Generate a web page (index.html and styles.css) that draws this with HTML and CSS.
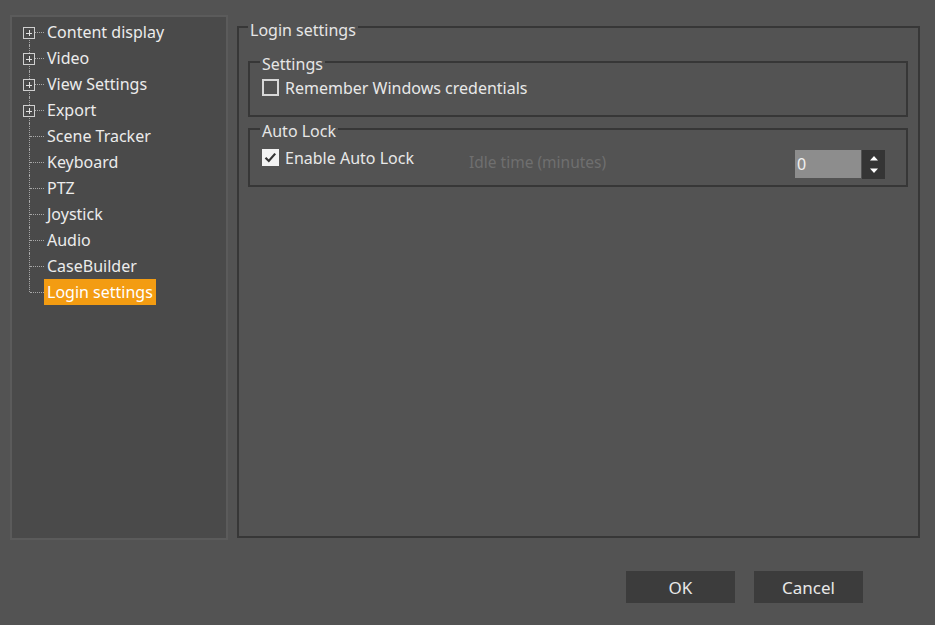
FILE: index.html
```html
<!DOCTYPE html>
<html lang="en">
<head>
<meta charset="utf-8">
<title>Options</title>
<link rel="stylesheet" href="styles.css">
</head>
<body>
<div class="dialog">
  <div class="dialog-body">
    <nav class="tree">
      <ul class="tree-list">
        <li class="tree-item first has-kids"><span class="expander"></span><span class="tree-label">Content display</span></li>
        <li class="tree-item has-kids"><span class="expander"></span><span class="tree-label">Video</span></li>
        <li class="tree-item has-kids"><span class="expander"></span><span class="tree-label">View Settings</span></li>
        <li class="tree-item has-kids"><span class="expander"></span><span class="tree-label">Export</span></li>
        <li class="tree-item"><span class="tree-label">Scene Tracker</span></li>
        <li class="tree-item"><span class="tree-label">Keyboard</span></li>
        <li class="tree-item"><span class="tree-label">PTZ</span></li>
        <li class="tree-item"><span class="tree-label">Joystick</span></li>
        <li class="tree-item"><span class="tree-label">Audio</span></li>
        <li class="tree-item"><span class="tree-label">CaseBuilder</span></li>
        <li class="tree-item last"><span class="tree-label selected">Login settings</span></li>
      </ul>
    </nav>

    <fieldset class="group page">
      <legend class="group-title">Login settings</legend>

      <fieldset class="group sub">
        <legend class="group-title">Settings</legend>
        <label class="check settings-check"><span class="check-box"></span>Remember Windows credentials</label>
      </fieldset>

      <fieldset class="group sub">
        <legend class="group-title">Auto Lock</legend>
        <div class="lock-row">
          <label class="check"><span class="check-box checked"><svg viewBox="0 0 17 17" width="17" height="17"><path d="M3.5 8.8 L6.8 12 L13.2 4.6" fill="none" stroke="#333" stroke-width="2.2"/></svg></span>Enable Auto Lock</label>
          <span class="idle-label">Idle time (minutes)</span>
          <div class="spin">
            <span class="spin-value">0</span>
            <div class="spin-buttons">
              <span class="spin-btn"><svg viewBox="0 0 10 6" width="10" height="6"><path d="M1 5.5 L5 1 L9 5.5 Z" fill="#fff"/></svg></span>
              <span class="spin-btn"><svg viewBox="0 0 10 6" width="10" height="6"><path d="M1 0.5 L5 5 L9 0.5 Z" fill="#fff"/></svg></span>
            </div>
          </div>
        </div>
      </fieldset>
    </fieldset>
  </div>

  <div class="dialog-footer">
    <button class="btn">OK</button>
    <button class="btn">Cancel</button>
  </div>
</div>
</body>
</html>
```

FILE: styles.css
```css
html, body {
  margin: 0;
  padding: 0;
}

body {
  background: #535353;
  color: #e8e8e8;
  font-family: "Noto Sans", "Open Sans", sans-serif;
  font-size: 16px;
}

.dialog {
  height: 625px;
  display: flex;
  flex-direction: column;
  box-sizing: border-box;
}

.dialog-body {
  display: flex;
  gap: 9px;
  height: 540px;
  box-sizing: border-box;
  padding: 14px 15px 0 10px;
}

/* ---- navigation tree ---- */
.tree {
  width: 218px;
  margin-top: 1px;
  box-sizing: border-box;
  border: 2px solid #5b5b5b;
  background: #4a4a4a;
  padding-top: 2px;
}

.tree-list {
  list-style: none;
  margin: 0;
  padding: 0;
}

.tree-item {
  position: relative;
  height: 26px;
  padding-left: 32px;
}

/* vertical connector */
.tree-item::before {
  content: "";
  position: absolute;
  left: 17px;
  top: 0;
  bottom: 0;
  border-left: 1px dotted #a8a8a8;
}

.tree-item.first::before {
  top: 13px;
}

.tree-item.last::before {
  bottom: 13px;
}

/* horizontal connector */
.tree-item::after {
  content: "";
  position: absolute;
  left: 18px;
  width: 14px;
  top: 13px;
  border-top: 1px dotted #a8a8a8;
}

.expander {
  position: absolute;
  left: 11px;
  top: 8px;
  width: 12px;
  height: 12px;
  box-sizing: border-box;
  border: 1px solid #cfcfcf;
  background:
    linear-gradient(#e0e0e0, #e0e0e0) center / 6px 1px no-repeat,
    linear-gradient(#e0e0e0, #e0e0e0) center / 1px 6px no-repeat,
    #4a4a4a;
  z-index: 1;
}

.tree-label {
  display: inline-block;
  line-height: 26px;
  padding: 0 3px;
  color: #ececec;
  white-space: nowrap;
}

.tree-label.selected {
  background: #f39c12;
  color: #ffffff;
}

/* ---- group boxes ---- */
.group {
  margin: 0;
  min-width: 0;
  border: 2px solid #373737;
}

/* captions sit a little below the frame line */
.group-title {
  line-height: 20px;
  padding: 4px 2px 0;
  color: #e6e6e6;
}

.page {
  flex: 1;
  margin: 0 0 2px 0;
  padding: 10px 10px 0 9px;
}

.page > .group-title {
  padding-top: 6px;
}

.sub {
  padding: 0 21px 0 12px;
}

.sub .group-title {
  margin-left: -2px;
}

.check {
  display: flex;
  align-items: center;
  height: 19px;
  white-space: nowrap;
}

.check-box {
  width: 17px;
  height: 17px;
  box-sizing: border-box;
  border: 2px solid #d8d8d8;
  margin-right: 6px;
  flex: none;
  display: flex;
}

.check-box.checked {
  border: none;
  background: #f2f2f2;
}

.settings-check {
  margin: 4px 0 18px;
}

.lock-row {
  display: grid;
  grid-template-columns: 207px 1fr auto;
  align-items: start;
  padding: 7px 0 6px;
}

.idle-label {
  color: #6f6f6f;
  font-size: 15.5px;
  margin-top: 3px;
  white-space: nowrap;
}

.spin {
  display: flex;
  gap: 1px;
  margin-top: 2px;
}

.spin-value {
  width: 66px;
  height: 28px;
  box-sizing: border-box;
  background: #8d8d8d;
  color: #f0f0f0;
  line-height: 28px;
  padding-left: 2px;
}

.spin-buttons {
  width: 23px;
  height: 29px;
  background: #353535;
  display: flex;
  flex-direction: column;
  justify-content: space-around;
  align-items: center;
  padding: 2px 0;
  box-sizing: border-box;
}

.spin-btn {
  display: flex;
}

/* ---- footer ---- */
.dialog-footer {
  display: flex;
  justify-content: flex-end;
  gap: 19px;
  padding: 31px 72px 0 0;
}

.btn {
  width: 109px;
  height: 32px;
  border: none;
  background: #3c3c3c;
  color: #e8e8e8;
  font-family: inherit;
  font-size: 17px;
}
```
